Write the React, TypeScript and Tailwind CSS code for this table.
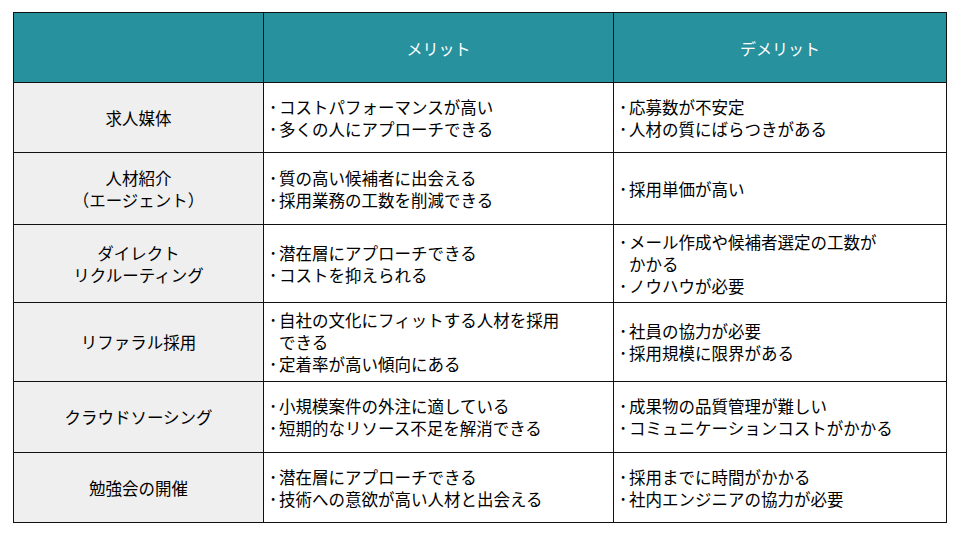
const rows: { name: string[]; merit: string[][]; demerit: string[][]; h: string }[] = [
  {
    name: ["求人媒体"],
    merit: [["コストパフォーマンスが高い"], ["多くの人にアプローチできる"]],
    demerit: [["応募数が不安定"], ["人材の質にばらつきがある"]],
    h: "h-[69px]",
  },
  {
    name: ["人材紹介", "（エージェント）"],
    merit: [["質の高い候補者に出会える"], ["採用業務の工数を削減できる"]],
    demerit: [["採用単価が高い"]],
    h: "h-[71px]",
  },
  {
    name: ["ダイレクト", "リクルーティング"],
    merit: [["潜在層にアプローチできる"], ["コストを抑えられる"]],
    demerit: [["メール作成や候補者選定の工数が", "かかる"], ["ノウハウが必要"]],
    h: "h-[77px]",
  },
  {
    name: ["リファラル採用"],
    merit: [["自社の文化にフィットする人材を採用", "できる"], ["定着率が高い傾向にある"]],
    demerit: [["社員の協力が必要"], ["採用規模に限界がある"]],
    h: "h-[78px]",
  },
  {
    name: ["クラウドソーシング"],
    merit: [["小規模案件の外注に適している"], ["短期的なリソース不足を解消できる"]],
    demerit: [["成果物の品質管理が難しい"], ["コミュニケーションコストがかかる"]],
    h: "h-[70px]",
  },
  {
    name: ["勉強会の開催"],
    merit: [["潜在層にアプローチできる"], ["技術への意欲が高い人材と出会える"]],
    demerit: [["採用までに時間がかかる"], ["社内エンジニアの協力が必要"]],
    h: "h-[69px]",
  },
];

const Bullets: React.FC<{ items: string[][] }> = ({ items }) => (
  <div className="flex flex-col justify-center bg-white pl-[5px] leading-[22px]">
    {items.map((lines, i) => (
      <div key={i}>
        {lines.map((l, j) => (
          <div key={j} className={j === 0 ? "" : "pl-[10px]"}>
            {j === 0 && <span className="inline-block w-[10px]">･</span>}
            {l}
          </div>
        ))}
      </div>
    ))}
  </div>
);

export default function App() {
  return (
    <div
      className="h-[540px] w-[960px] bg-white pl-[13px] pt-[12px] text-[16.5px] text-black"
      style={{ fontFamily: '"Noto Sans CJK JP", "Noto Sans", sans-serif' }}
    >
      <div className="grid w-[934px] grid-cols-[249px_349px_332px] gap-px bg-[#111] p-px">
        <div className="h-[69px] bg-[#27919e]" />
        <div className="flex items-center justify-center bg-[#27919e] text-[16px] text-white">メリット</div>
        <div className="flex items-center justify-center bg-[#27919e] text-[16px] text-white">デメリット</div>
        {rows.map((r) => (
          <div key={r.name.join("")} className="contents">
            <div className={`flex flex-col items-center justify-center bg-[#efefef] leading-[22px] ${r.h}`}>
              {r.name.map((n) => (
                <div key={n}>{n}</div>
              ))}
            </div>
            <Bullets items={r.merit} />
            <Bullets items={r.demerit} />
          </div>
        ))}
      </div>
    </div>
  );
}
